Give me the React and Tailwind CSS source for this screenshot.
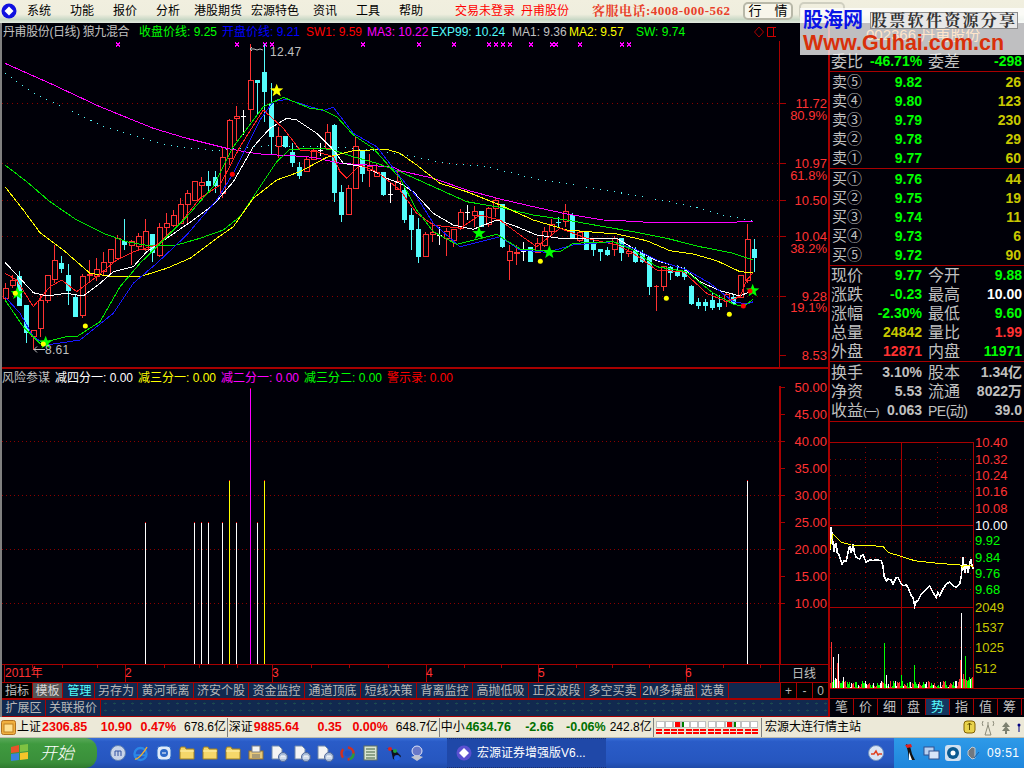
const sans = { fontFamily: '"Liberation Sans","Noto Sans CJK SC",sans-serif' };

const RED = "#ff3232";
const CYAN = "#54fcfc";
const LINE = "#a80000";
const DOT = "#8a0000";

// [bodyTop, bodyBottom, high, low, kind] in 3x crop units, r = up, c = down, w = white doji
const left = [
  [715,745,700,750,"r"],[692,705,675,715,"r"],[678,768,662,768,"c"],[765,850,765,878,"c"],[840,858,840,900,"r"],
  [752,835,735,860,"r"],[676,752,676,758,"r"],[630,688,585,700,"r"],[640,656,618,668,"c"],[675,722,642,765,"c"],
  [742,800,735,800,"c"],[680,795,672,805,"r"],[672,676,630,695,"r"],[658,680,625,692,"r"],[636,665,605,675,"r"],
  [598,638,598,672,"r"],[565,625,555,630,"r"],[574,584,508,600,"c"],[575,586,570,645,"r"],[560,590,550,600,"r"],
  [545,598,508,603,"r"],[553,610,553,635,"c"],[532,616,518,620,"r"],[520,532,490,565,"r"],[496,526,480,530,"r"],
  [462,520,445,522,"r"],[430,464,420,520,"r"],[394,452,392,452,"r"],[397,406,380,450,"r"],[394,408,362,425,"c"],
  [382,408,362,430,"c"],[322,430,295,445,"r"],[212,325,208,345,"r"],[199,205,168,272,"r"],[199,199,180,255,"w"],
  [92,178,-18,215,"r"],[90,100,90,195,"c"],[66,125,-18,215,"c"],[160,260,100,312,"c"],[260,290,230,325,"r"],
  [258,292,258,295,"c"],[305,338,278,352,"c"],[350,378,335,388,"c"],[328,365,318,365,"r"],[300,328,296,330,"r"],
  [300,300,280,318,"w"],[248,296,222,298,"r"],[226,430,222,455,"c"],[427,495,405,515,"c"],[415,492,405,495,"r"],
  [290,415,262,415,"r"],[302,372,302,395,"c"],[348,360,312,412,"r"],[368,380,340,380,"r"],[366,434,366,438,"c"],
  [433,433,395,458,"w"],[395,418,362,420,"r"],
  [420,510,405,520,"c"],[495,540,475,600,"c"],[538,620,505,640,"c"],[553,618,545,620,"r"],[546,552,520,575,"r"],
  [555,555,530,585,"w"],[544,566,535,618,"r"],[537,572,537,590,"r"],[487,535,478,540,"r"],[487,487,465,510,"w"],
  [484,497,468,530,"r"],[484,530,484,532,"c"],[475,523,472,530,"r"],[450,475,445,500,"r"],[462,590,462,595,"c"],
  [604,632,585,690,"r"],[606,610,585,645,"r"],[604,604,575,632,"w"],[590,635,590,635,"c"],[580,608,565,610,"r"],
  [545,587,530,590,"r"],[522,544,508,555,"r"],[518,518,500,535,"c"],[485,515,462,530,"r"],[495,565,490,568,"c"],
  [548,572,540,575,"r"],[545,600,545,600,"c"],[575,600,565,618,"c"],[598,606,598,632,"c"],[600,615,590,618,"c"],
  [565,598,558,618,"r"],[565,610,565,632,"c"],[603,610,585,622,"r"],[603,635,590,638,"c"],[610,635,600,640,"c"],
  [622,710,622,735,"c"],[708,708,705,782,"r"],[650,710,648,722,"r"],[650,668,648,690,"c"],[664,678,645,682,"c"],
  [666,682,650,690,"c"],[708,762,705,765,"c"],[756,768,745,778,"c"],[756,768,748,782,"c"],[750,775,730,780,"c"],
  [760,772,735,780,"c"],[734,755,730,772,"r"],[740,762,735,765,"c"],[676,742,676,745,"r"],[568,690,522,700,"r"],
  [598,624,568,666,"c"],
];

const shift = (a, dx = 1200) => a.map(([x, y]) => [x + dx, y]);

const lines = {
  magenta: [[15,40],[150,100],[300,170],[460,235],[560,265],[680,295],[750,308],[800,314],[860,316],[940,322],[1020,340],[1100,345],[1180,352],
    ...shift([[0,362],[100,385],[200,420],[300,447],[400,470],[500,492],[610,510],[700,514],[760,518],[900,518],[1060,515]])],
  cyan: [[15,70],[100,130],[200,175],[300,225],[400,255],[500,285],[640,302],[800,287],[1000,290],[1100,300],
    ...shift([[30,318],[140,340],[260,350],[400,385],[540,408],[700,435],[860,465],[980,498],[1060,512]])],
  green: [[15,345],[80,395],[150,455],[230,510],[310,550],[380,575],[450,588],[530,585],[600,565],[670,540],[720,500],[770,425],[830,335],[870,298],[960,295],[1000,300],[1060,320],[1130,340],
    ...shift([[0,365],[100,410],[200,455],[300,472],[400,495],[500,510],[600,528],[700,545],[800,565],[900,590],[1000,610],[1060,630]])],
  yellow: [[15,410],[70,480],[120,548],[190,600],[270,670],[340,680],[420,680],[500,655],[570,625],[650,565],[700,530],[760,445],[830,390],[900,365],[980,322],[1060,302],[1160,298],
    ...shift([[0,310],[50,345],[120,400],[200,425],[300,465],[400,510],[500,540],[650,552],[740,572],[810,602],[880,612],[950,632],[1020,665],[1060,668]])],
  white: [[15,637],[60,685],[100,728],[140,738],[200,730],[250,738],[300,700],[340,665],[400,650],[440,605],[500,565],[580,510],[640,465],[700,395],[760,290],[810,235],[860,205],[890,210],[950,250],[1000,300],[1030,340],[1100,352],[1160,385],
    ...shift([[0,400],[40,425],[100,490],[160,525],[220,538],[290,510],[350,530],[410,555],[480,565],[560,565],[650,565],[700,595],[770,632],[850,655],[900,695],[960,722],[1020,738],[1060,720]])],
  red: [[15,670],[50,690],[100,770],[150,710],[185,690],[230,725],[290,680],[350,630],[400,605],[470,585],[540,520],[600,445],[660,405],[720,290],[790,180],[850,235],[900,300],[950,305],[1000,320],[1020,365],[1040,385],[1080,345],[1130,365],
    ...shift([[0,420],[50,490],[100,525],[180,535],[240,495],[300,510],[360,555],[410,590],[480,535],[560,565],[650,585],[700,610],[770,660],[850,665],[920,730],[980,755],[1020,740],[1040,690],[1060,668]])],
  blue: [[15,740],[60,790],[100,860],[140,885],[240,870],[340,790],[400,700],[470,640],[560,555],[650,450],[700,370],[780,210],[820,155],[860,148],[970,182],[1000,172],[1060,250],[1130,290],
    ...shift([[0,380],[50,440],[100,520],[180,590],[300,560],[360,600],[440,607],[520,585],[640,575],[700,595],[770,630],[860,660],[930,700],[1000,755],[1040,762],[1060,755]])],
  lime: [[15,750],[70,830],[120,880],[200,860],[230,860],[300,815],[360,710],[420,640],[470,590],[560,500],[640,410],[700,290],[790,170],[850,142],[930,175],[970,180],[1010,200],[1060,255],[1120,295],
    ...shift([[0,385],[50,480],[100,545],[170,583],[290,553],[360,597],[480,605],[520,580],[640,575],[700,600],[770,650],[860,665],[940,730],[1000,762],[1030,770],[1060,748]])],
};

const sx = (x) => x / 3;
const sy = (y) => 9 + y / 3;
const pts = (a) => a.map(([x, y]) => `${sx(x).toFixed(1)},${sy(y).toFixed(1)}`).join(" ");

function starPath(cx, cy, r) {
  let d = "";
  for (let i = 0; i < 10; i++) {
    const rad = i % 2 ? r * 0.42 : r;
    const a = (Math.PI / 5) * i - Math.PI / 2;
    d += `${i ? "L" : "M"}${(cx + rad * Math.cos(a)).toFixed(1)} ${(cy + rad * Math.sin(a)).toFixed(1)}`;
  }
  return d + "Z";
}

const xMarks = [118,237,265,272,363,419,454,489,496,503,510,531,552,556,580,622,629];
const gridY = [103, 163, 200, 236, 296];
const axisLabels = [
  [103, "11.72"], [115, "80.9%"], [163, "10.97"], [175, "61.8%"], [200, "10.50"],
  [236, "10.04"], [248, "38.2%"], [296, "9.28"], [307, "19.1%"], [355, "8.53"],
];

function MainChart() {
  return (
    <svg width="826" height="326" viewBox="2 0 826 326" className="block shrink-0" style={sans}>
      {gridY.map((y) => (
        <line key={y} x1="2" x2="779" y1={y - 40.5} y2={y - 40.5} stroke={DOT} strokeDasharray="1 4" />
      ))}
      <line x1="779.5" x2="779.5" y1="-18" y2="326" stroke={LINE} />
      {gridY.concat(355).map((y) => (
        <line key={y} x1="780" x2="786" y1={y - 40.5} y2={y - 40.5} stroke={LINE} />
      ))}
      {axisLabels.map(([y, t]) => (
        <text key={t} x="827" y={y - 41 + 4.5} textAnchor="end" fontSize="13" fill={RED}>{t}</text>
      ))}
      <g stroke="#ff00ff" shapeRendering="crispEdges">
        {xMarks.map((x) => (
          <path key={x} d={`M${x - 2} 1.5l4 4m0-4l-4 4`} fill="none" strokeWidth="1.3" />
        ))}
      </g>
      <g shapeRendering="crispEdges">
        {left.map(([t, b, hi, lo, k], i) => {
          const x = 5.5 + 7 * i;
          const col = k === "r" ? RED : k === "c" ? CYAN : "#ffffff";
          const top = sy(t), bot = sy(b);
          return (
            <g key={i}>
              <line x1={x} x2={x} y1={sy(hi)} y2={sy(lo)} stroke={col} />
              {t === b ? (
                <line x1={x - 2.5} x2={x + 2.5} y1={top} y2={top} stroke={col} />
              ) : k === "c" ? (
                <rect x={x - 2.5} y={top} width="5" height={bot - top} fill={col} />
              ) : (
                <rect x={x - 2.5} y={top} width="5" height={bot - top} fill="#000008" stroke={col} />
              )}
            </g>
          );
        })}
        <polyline points={pts(lines.magenta)} fill="none" stroke="#ff00ff" />
        <polyline points={pts(lines.cyan)} fill="none" stroke={CYAN} strokeDasharray="1 6" />
        <polyline points={pts(lines.green)} fill="none" stroke="#00e800" />
        <polyline points={pts(lines.yellow)} fill="none" stroke="#ffff00" />
        <polyline points={pts(lines.white)} fill="none" stroke="#ffffff" />
        <polyline points={pts(lines.red)} fill="none" stroke="#ff2020" />
        <polyline points={pts(lines.blue)} fill="none" stroke="#1818ff" />
        <polyline points={pts(lines.lime)} fill="none" stroke="#00e800" />
      </g>
      {[[52,730],[137,878],[1437,550],[1648,607],[2258,722]].map(([x, y]) => (
        <path key={x} d={starPath(sx(x), sy(y), 7)} fill="#00ff00" />
      ))}
      <path d={starPath(sx(830), sy(122), 7)} fill="#ffff00" />
      {[[46,730],[130,882],[256,828],[1621,634],[1999,745],[2188,793]].map(([x, y]) => (
        <circle key={x} cx={sx(x)} cy={sy(y)} r="2.5" fill="#ffff00" />
      ))}
      {[[697,373],[2230,768],[2250,723]].map(([x, y]) => (
        <circle key={x} cx={sx(x)} cy={sy(y)} r="2.5" fill="#ff0000" />
      ))}
      <path d="M251 8h3m-2-2l-2 2 2 2M254 8l3 1 3-1 3 1" stroke="#c0c0c0" fill="none" />
      <text x="270" y="15" fontSize="12" letterSpacing="0.3" fill="#c0c0c0">12.47</text>
      <path d="M34 308.5h11M34 308.5l3-3M34 308.5l3 3" stroke="#c0c0c0" fill="none" />
      <text x="45" y="313" fontSize="12" letterSpacing="0.3" fill="#c0c0c0">8.61</text>
    </svg>
  );
}

const indLabels = ["50.00","45.00","40.00","35.00","30.00","25.00","20.00","15.00","10.00"];
const bars = [
  [145,522,"#fff"],[194,522,"#fff"],[201,522,"#fff"],[208,522,"#fff"],[222,522,"#fff"],[229,480,"#ffff00"],[236,522,"#fff"],
  [250,388,"#ff00ff"],[257,522,"#fff"],[264,480,"#ffff00"],[747,480,"#fff"],
];

function IndicatorChart() {
  return (
    <svg width="826" height="278" viewBox="2 386 826 278" className="block shrink-0 overflow-visible" style={sans}>
      {[441.5, 495.5, 549.5, 603.5].map((y) => (
        <line key={y} x1="2" x2="779" y1={y} y2={y} stroke={DOT} strokeDasharray="1 3" />
      ))}
      <rect x="779" y="386" width="2" height="278" fill={LINE} />
      {bars.map(([x, top, c]) => (
        <g key={x} shapeRendering="crispEdges">
          <line x1={x + 0.5} x2={x + 0.5} y1={top} y2="664" stroke={c} />
          <line x1={x + 0.5} x2={x + 0.5} y1={top} y2={top + 1} stroke="#ff0000" />
        </g>
      ))}
      {indLabels.map((t, i) => (
        <g key={t}>
          <line x1="781" x2="785" y1={387.5 + i * 27} y2={387.5 + i * 27} stroke={LINE} />
          <text x="827" y={392 + i * 27} textAnchor="end" fontSize="13" fill={RED}>{t}</text>
        </g>
      ))}
    </svg>
  );
}

const monthTicks = [
  [2, "2011年", 5], [123, "2", 125], [270, "3", 272], [424, "4", 426], [536, "5", 538], [684, "6", 685],
];
const minorTicks = [30,60,95,162,197,235,309,347,386,462,499,574,610,647,721,758];

function TimeAxis() {
  return (
    <div className="flex h-[17px] shrink-0 text-[12px] text-[#ff3232]">
      <div className="relative w-[777px] overflow-hidden">
        {monthTicks.map(([x, t, tx]) => (
          <span key={t}>
            <i className="absolute top-0 h-[17px] w-px bg-[#a80000]" style={{ left: x }} />
            <span className="absolute top-0 leading-[16px]" style={{ left: tx - 2 }}>{t}</span>
          </span>
        ))}
        {minorTicks.map((x) => (
          <i key={x} className="absolute top-0 h-[3px] w-px bg-[#a80000]" style={{ left: x }} />
        ))}
      </div>
      <div className="flex w-[49px] items-center justify-center border-l border-[#a80000] text-[#c0c0c0]">日线</div>
    </div>
  );
}

const tabCells = [
  ["指标","w-[31px] bg-black text-[#c0c0c0]"],["模板","w-[30px] bg-[#555555] text-[#d8d8d8]"],["管理","w-[30px] text-[#54fcfc] ml-[2px]"],
  ["另存为","w-[43px]"],["黄河乖离","w-[56px]"],["济安个股","w-[55px]"],["资金监控","w-[56px]"],["通道顶底","w-[56px]"],
  ["短线决策","w-[56px]"],["背离监控","w-[56px]"],["高抛低吸","w-[56px]"],["正反波段","w-[56px]"],["多空买卖","w-[56px]"],
  ["2M多操盘","w-[56px]"],["选黄","w-[32px]"],
];

function TabBar() {
  return (
    <div className="flex h-[17px] shrink-0 border-y border-[#a80000] bg-[#11294f] text-[12px] text-[#b8b8b8]">
      {tabCells.map(([t, c]) => (
        <div key={t} className={`flex items-center justify-center border-r border-[#a80000] ${c}`}>{t}</div>
      ))}
      <div className="flex-1" />
      {["+", "-", "0"].map((t) => (
        <div key={t} className="flex w-[16px] items-center justify-center border-l border-[#a80000] bg-black">{t}</div>
      ))}
    </div>
  );
}

function ExtBar() {
  return (
    <div className="flex h-[18px] shrink-0 border-y border-[#a80000] bg-[#11294f] text-[12px] text-[#b8b8b8] bg-[radial-gradient(#1d4a50_1px,transparent_1.5px)] bg-[length:9px_7px]">
      <div className="flex w-[44px] items-center justify-center border-r border-[#a80000] bg-[#11294f]">扩展区</div>
      <div className="flex w-[55px] items-center justify-center border-r border-[#a80000] bg-[#11294f]">关联报价</div>
    </div>
  );
}

function Quote({ a, b, c, d, bColor = "text-[#00ff00]", dColor = "text-[#00ff00]" }) {
  return (
    <div className="flex h-[19px] items-center text-[16px] text-[#c0c0c0]">
      <span className="w-[40px] shrink-0 whitespace-nowrap pl-[1px]">{a}</span>
      <span className={`w-[52px] whitespace-nowrap text-right text-[14px] font-bold ${bColor}`}>{b}</span>
      <span className="ml-[6px] w-[34px] shrink-0 whitespace-nowrap">{c}</span>
      <span className={`w-[60px] whitespace-nowrap text-right text-[14px] font-bold ${dColor}`}>{d}</span>
    </div>
  );
}

function Level({ name, price, vol }) {
  return (
    <div className="flex h-[19px] items-center text-[15px] text-[#c0c0c0]">
      <span className="w-[46px] whitespace-nowrap pl-[2px]">{name}</span>
      <span className="w-[46px] text-right text-[14px] font-bold text-[#00ff00]">{price}</span>
      <span className="flex-1 pr-[3px] text-right text-[14px] font-bold text-[#c8c800]">{vol}</span>
    </div>
  );
}

const sell = [["卖⑤","9.82","26"],["卖④","9.80","123"],["卖③","9.79","230"],["卖②","9.78","29"],["卖①","9.77","60"]];
const buy = [["买①","9.76","44"],["买②","9.75","19"],["买③","9.74","11"],["买④","9.73","6"],["买⑤","9.72","90"]];

const whiteLine = [[5,365],[10,295],[13,330],[15,340],[18,370],[22,345],[25,345],[28,372],[32,375],[42,405],[48,395],[55,395],[60,370],[65,350],[70,372],[75,345],[80,375],[85,385],[95,390],[100,380],[105,378],[115,400],[125,392],[135,395],[145,392],[160,395],[165,410],[168,440],[175,455],[180,450],[188,452],[195,465],[205,445],[210,445],[220,465],[225,470],[235,468],[240,475],[250,500],[255,505],[260,530],[265,515],[270,515],[280,495],[290,485],[305,470],[315,490],[325,505],[330,490],[335,500],[345,480],[355,465],[365,460],[375,470],[385,475],[395,465],[400,440],[405,385],[410,432],[415,405],[420,432],[428,390],[432,410],[436,420]];
const yellowLine = [[5,365],[15,315],[40,340],[70,348],[165,352],[180,370],[260,395],[320,402],[395,408],[402,415],[410,408],[436,412]];
const volPeaks = {
  831: [46, "#ff3232"], 833: [31, "#fff"], 838: [34, "#fff"], 837: [25, "#ff3232"], 884: [45, "#00ff00"], 886: [13, "#fff"],
  914: [23, "#00ff00"], 901: [13, "#00ff00"], 961: [75, "#fff"], 960: [28, "#ff3232"], 965: [32, "#00ff00"], 963: [14, "#ff3232"], 971: [10, "#00ff00"],
};
const volColors = ["#ff3232", "#00ff00", "#fff", "#ff3232", "#00ff00"];
const vols = Array.from({ length: 143 }, (_, i) => {
  const px = 830 + i;
  if (volPeaks[px]) return [px, ...volPeaks[px]];
  const h = 1 + ((i * 37 + (i * i) % 23) % 7);
  const edge = i < 14 || i > 128;
  return [px, edge ? h + 4 : h, volColors[(i * 7 + (i % 3)) % 5]];
});

const minuteLabels = [
  [443,"10.40",RED],[460,"10.32",RED],[476,"10.24",RED],[492,"10.16",RED],[509,"10.08",RED],[526,"10.00","#fff"],
  [541,"9.92","#00ff00"],[558,"9.84","#00ff00"],[574,"9.76","#00ff00"],[590,"9.68","#00ff00"],
  [608,"2049","#c8c800"],[628,"1537","#c8c800"],[648,"1025","#c8c800"],[669,"512","#c8c800"],
];

function MinuteChart() {
  const px = (a) => a.map(([x, y]) => `${(828 + x / 3).toFixed(1)},${(430 + y / 3).toFixed(1)}`).join(" ");
  return (
    <svg width="194" height="276" viewBox="830 423 194 276" className="block shrink-0" style={sans}>
      {[460,476,492,509,542,558,574,590,628,648,669].map((y) => (
        <line key={y} x1="830" x2="973" y1={y + 0.5} y2={y + 0.5} stroke={DOT} strokeDasharray="1 4" />
      ))}
      {[865, 937].map((x) => (
        <line key={x} x1={x + 0.5} x2={x + 0.5} y1="443" y2="689" stroke={DOT} strokeDasharray="1 4" />
      ))}
      <line x1="901.5" x2="901.5" y1="443" y2="689" stroke={LINE} />
      {[443, 526, 608, 689].map((y) => (
        <line key={y} x1="830" x2={y === 689 ? 1024 : 973} y1={y + 0.5} y2={y + 0.5} stroke={LINE} />
      ))}
      <line x1="973.5" x2="973.5" y1="443" y2="689" stroke={LINE} />
      {vols.map(([x, h, c]) => (
        <line key={x} x1={x + 0.5} x2={x + 0.5} y1={689 - h} y2="689" stroke={c} shapeRendering="crispEdges" />
      ))}
      <polyline points={px(whiteLine)} fill="none" stroke="#fff" strokeWidth="1.6" shapeRendering="crispEdges" />
      <polyline points={px(yellowLine)} fill="none" stroke="#ffff00" shapeRendering="crispEdges" />
      {minuteLabels.map(([y, t, c]) => (
        <text key={t} x="975" y={y + 5} fontSize="13" fill={c}>{t}</text>
      ))}
    </svg>
  );
}

const sideTabs = ["笔","价","细","盘","势","指","值","筹"];

function RightPanel() {
  return (
    <div className="flex w-[196px] flex-col border-l-2 border-[#a80000] bg-[#000008]">
      <div className="h-[29px] shrink-0 pt-[2px] pl-[36px] text-[15px] leading-[20px] text-[#ff9c30]">002366 丹甫股份</div>
      <div className="shrink-0 border-b border-[#a80000]">
        <Quote a="委比" b="-46.71%" c="委差" d="-298" />
      </div>
      <div className="shrink-0 border-b border-[#a80000] pt-[1px]">
        {sell.map(([n, p, v]) => <Level key={n} name={n} price={p} vol={v} />)}
      </div>
      <div className="shrink-0 border-b border-[#a80000] pt-[1px]">
        {buy.map(([n, p, v]) => <Level key={n} name={n} price={p} vol={v} />)}
      </div>
      <div className="shrink-0 border-b border-[#a80000]">
        <Quote a="现价" b="9.77" c="今开" d="9.88" />
        <Quote a="涨跌" b="-0.23" c="最高" d="10.00" dColor="text-white" />
        <Quote a="涨幅" b="-2.30%" c="最低" d="9.60" />
        <Quote a="总量" b="24842" bColor="text-[#c8c800]" c="量比" d="1.99" dColor="text-[#ff3232]" />
        <Quote a="外盘" b="12871" bColor="text-[#ff3232]" c="内盘" d="11971" />
      </div>
      <div className="shrink-0 border-b border-[#a80000] py-[1px]">
        <Quote a="换手" b="3.10%" bColor="text-[#c0c0c0]" c="股本" d="1.34亿" dColor="text-[#c0c0c0]" />
        <Quote a="净资" b="5.53" bColor="text-[#c0c0c0]" c="流通" d="8022万" dColor="text-[#c0c0c0]" />
        <Quote a={<>收益<span className="text-[11px] tracking-[-1px]">(一)</span></>} b="0.063" bColor="text-[#c0c0c0]" c={<span className="text-[14px] tracking-[-0.5px]">PE(动)</span>} d="39.0" dColor="text-[#c0c0c0]" />
      </div>
      <MinuteChart />
      <div className="flex h-[17px] shrink-0 border-t border-[#a80000] text-[13px] text-[#c0c0c0]">
        {sideTabs.map((t) => (
          <div key={t} className={`flex w-[24px] items-center justify-center border-r border-[#a80000] ${t === "势" ? "bg-[#14365f] text-[#54fcfc]" : ""}`}>{t}</div>
        ))}
      </div>
    </div>
  );
}

const menu = [
  ["系统","w-[43px]"],["功能","w-[43px]"],["报价","w-[43px]"],["分析","w-[38px]"],["港股期货","w-[57px]"],
  ["宏源特色","w-[62px]"],["资讯","w-[43px]"],["工具","w-[43px]"],["帮助","w-[56px]"],
];

function TopBar() {
  return (
    <div className="flex h-[23px] items-center bg-[linear-gradient(180deg,#f1efdf_0%,#efeede_62%,#c9d8c6_85%,#e4ebe0_100%)] pb-[2px] text-[12px] text-black">
      <svg width="16" height="16" viewBox="0 0 16 16" className="ml-[1px] mr-[10px] shrink-0">
        <circle cx="8" cy="8" r="7.5" fill="#1010e0" />
        <path d="M8 3.5L12.5 8 8 12.5 3.5 8z" fill="#fff" />
      </svg>
      {menu.map(([t, w]) => <span key={t} className={`shrink-0 ${w}`}>{t}</span>)}
      <span className="w-[66px] shrink-0 text-[#ff0000]">交易未登录</span>
      <span className="w-[71px] shrink-0 text-[#ff0000]">丹甫股份</span>
      <span className="w-[151px] shrink-0 font-['Liberation_Serif','Noto_Serif_CJK_SC',serif] text-[13px] font-bold tracking-[0.5px] text-[#e8402a]">客服电话:4008-000-562</span>
      <span className="flex h-[18px] w-[50px] shrink-0 items-center justify-center rounded-[5px] border-2 border-[#b8b8a8] bg-[#f8f6ea] text-[13px]">行　情</span>
      <span className="ml-[6px] h-[18px] w-[46px] shrink-0 rounded-[5px] border-2 border-[#cfcfc0]" />
    </div>
  );
}

function Watermark() {
  return (
    <div className="absolute left-[800px] top-[8px] h-[47px] w-[224px] overflow-hidden bg-white/75">
      <div className="flex h-[25px] items-center">
        <span className="ml-[3px] w-[67px] text-[20px] font-bold leading-[25px] text-[#0a14e6]">股海网</span>
        <span className="flex h-[17px] items-center border border-[#8c8c8c] bg-[#e8e8e8] text-[#333] font-['Liberation_Serif','Noto_Serif_CJK_SC',serif] text-[16px] font-bold leading-[17px] tracking-[2.3px] whitespace-nowrap">股票软件资源分享</span>
      </div>
      <div className="ml-[3px] whitespace-nowrap text-[21.5px] font-bold leading-[20px] text-[#d9300a]">Www.Guhai.com.cn</div>
    </div>
  );
}

function Cell({ w, c = "", right, bold, children }) {
  return (
    <span className={`shrink-0 whitespace-nowrap ${w} ${right ? "text-right" : ""} ${bold ? "text-[12.5px] font-bold" : ""} ${c}`}>{children}</span>
  );
}

function Gauge() {
  const top = [0, 1, 2, 3, 4, 5];
  return (
    <div className="w-[50px] shrink-0">
      <div className="flex h-[7px]">
        {top.map((i) => (
          <div key={i} className="relative flex-1 border border-[#c0c0c0] bg-white">
            {i === 2 && <i className="absolute right-0 top-0 h-full w-[5px] bg-[#ff0000]" />}
            {i === 3 && <i className="absolute left-0 top-0 h-full w-[2px] bg-[#008000]" />}
          </div>
        ))}
      </div>
      {[0, 1].map((r) => (
        <div key={r} className="mt-[1px] flex justify-between">
          {[0, 1, 2, 3, 4, 5, 6].map((i) => <i key={i} className="h-[2px] w-[6px] bg-[#ff0000]" />)}
        </div>
      ))}
    </div>
  );
}

function StatusBar() {
  return (
    <div className="flex h-[21px] items-center border-b border-[#bdbdb0] bg-[#ece9d8] text-[12px] text-black">
      <svg width="15" height="15" viewBox="0 0 15 15" className="ml-[1px] mr-[1px] shrink-0">
        <rect x="0.5" y="0.5" width="14" height="14" rx="2" fill="#f0b040" stroke="#b07020" />
        <rect x="3" y="4" width="9" height="8" fill="#ffe090" stroke="#c08020" />
      </svg>
      <Cell w="w-[25px]">上证</Cell>
      <Cell w="w-[46px]" bold c="text-[#f00000]">2306.85</Cell>
      <Cell w="w-[44px]" right bold c="text-[#f00000]">10.90</Cell>
      <Cell w="w-[44px]" right bold c="text-[#f00000]">0.47%</Cell>
      <Cell w="w-[50px]" right>678.6亿</Cell>
      <i className="mx-[1px] h-[19px] w-px bg-[#808080]" />
      <Cell w="w-[25px]">深证</Cell>
      <Cell w="w-[47px]" bold c="text-[#f00000]">9885.64</Cell>
      <Cell w="w-[41px]" right bold c="text-[#f00000]">0.35</Cell>
      <Cell w="w-[46px]" right bold c="text-[#f00000]">0.00%</Cell>
      <Cell w="w-[50px]" right>648.7亿</Cell>
      <i className="mx-[1px] h-[19px] w-px bg-[#808080]" />
      <Cell w="w-[25px]">中小</Cell>
      <Cell w="w-[47px]" bold c="text-[#007000]">4634.76</Cell>
      <Cell w="w-[41px]" right bold c="text-[#007000]">-2.66</Cell>
      <Cell w="w-[52px]" right bold c="text-[#007000]">-0.06%</Cell>
      <Cell w="w-[46px]" right>242.8亿</Cell>
      <i className="ml-[1px] mr-[3px] h-[19px] w-px bg-[#808080]" />
      <Gauge />
      <div className="w-[2px]" />
      <Gauge />
      <i className="mx-[3px] h-[19px] w-px bg-[#808080]" />
      <Cell w="w-[198px]">宏源大连行情主站</Cell>
      <svg width="61" height="20" viewBox="0 0 61 20" className="shrink-0">
        <rect x="1" y="4" width="11" height="12" rx="3" fill="#e8d24a" stroke="#806000" />
        <path d="M6.5 6v7M4.5 8l2-2 2 2" stroke="#605000" fill="none" />
        <path d="M25 8l-3 10h6zM25 8V5M20 4a5 5 0 0 0 0 5M30 4a5 5 0 0 1 0 5" stroke="#8a8a78" fill="none" />
        <path d="M43 5l-4 5h8zM43 9l-4 5h8zM42 14h2v3h-2z" fill="#7c8070" />
        <circle cx="56" cy="8" r="1.5" fill="#000080" />
        <path d="M56 9v6" stroke="#000080" />
      </svg>
    </div>
  );
}

function Folder() {
  return (
    <svg width="16" height="14" viewBox="0 0 16 14">
      <path d="M1 3l1-2h4l1 2h8v10H1z" fill="#f5d76a" stroke="#a08020" />
      <path d="M1 5h14" stroke="#fff2b0" />
    </svg>
  );
}
function Paper() {
  return (
    <svg width="18" height="17" viewBox="0 0 18 17">
      <path d="M2 1h7l3 3v10H2z" fill="#f4f4f4" stroke="#7088a8" />
      <circle cx="13" cy="12" r="4.5" fill="#a8bcd8" stroke="#50689a" />
      <path d="M11 14v-3h4v3M13 11v3" stroke="#fff" fill="none" />
    </svg>
  );
}

const quick = [
  <svg key="m" width="16" height="16" viewBox="0 0 16 16"><circle cx="8" cy="8" r="7.5" fill="#c8d4e8" stroke="#6080b0" /><path d="M5 11V6h6v5M8 6v5" stroke="#3050a0" fill="none" /></svg>,
  <svg key="e" width="17" height="17" viewBox="0 0 17 17"><circle cx="8.5" cy="9" r="6" fill="none" stroke="#2a88e8" strokeWidth="2.4" /><path d="M3 10.2h11" stroke="#2a88e8" strokeWidth="2" /><path d="M3 14C6 15 13 6 15 2" stroke="#f0b030" fill="none" strokeWidth="1.4" /></svg>,
  <svg key="o" width="16" height="16" viewBox="0 0 16 16"><rect x="1" y="1" width="14" height="14" rx="4" fill="#dfeaf8" stroke="#2a68c8" /><circle cx="8" cy="8" r="4" fill="#2a68c8" /><path d="M6 8h4" stroke="#fff" /></svg>,
  <Folder key="f1" />, <Folder key="f2" />, <Folder key="f3" />,
  <svg key="p" width="16" height="16" viewBox="0 0 16 16"><rect x="1" y="6" width="14" height="8" fill="#e8c878" stroke="#907030" /><rect x="4" y="1" width="8" height="6" fill="#f4f4f4" stroke="#808080" /><path d="M4 10h8M4 12h8" stroke="#707070" /></svg>,
  <Paper key="a" />, <Paper key="b" />, <Paper key="c" />,
  <svg key="w" width="17" height="17" viewBox="0 0 17 17"><circle cx="8.5" cy="8.5" r="6" fill="none" stroke="#d03020" strokeWidth="2.5" strokeDasharray="9 5" /><circle cx="8.5" cy="8.5" r="6" fill="none" stroke="#20a040" strokeWidth="2.5" strokeDasharray="7 30" /><circle cx="8.5" cy="8.5" r="3" fill="#2050c0" /></svg>,
  <svg key="n" width="15" height="16" viewBox="0 0 15 16"><rect x="1" y="1" width="13" height="14" fill="#d8e4d0" stroke="#607060" /><path d="M3 4h9M3 7h9M3 10h9M3 13h9" stroke="#406040" /></svg>,
  <svg key="g" width="17" height="17" viewBox="0 0 17 17"><path d="M1 3l5 2 2 9 5 2 3-5-5-5z" fill="#101020" /><circle cx="5" cy="4" r="2" fill="#e02020" /><circle cx="10" cy="6" r="2" fill="#20a040" /><circle cx="12" cy="13" r="3" fill="#2060e0" /></svg>,
  <svg key="c2" width="16" height="17" viewBox="0 0 16 17"><circle cx="8" cy="6" r="5" fill="#6878c8" stroke="#e0e4f8" /><path d="M2 12l6-2 6 2-6 4z" fill="#c0c4d0" /></svg>,
];

function Taskbar() {
  return (
    <div className="flex h-[30px] items-stretch bg-[linear-gradient(180deg,#3a6fd8_0%,#2a5cc8_12%,#2656bf_80%,#1f4aa8_100%)] text-white">
      <div className="flex w-[97px] shrink-0 items-center rounded-r-[12px] bg-[linear-gradient(180deg,#5aa85a_0%,#3f9a3f_20%,#3a8f3a_80%,#2f7a2f_100%)] pl-[10px]">
        <svg width="20" height="18" viewBox="0 0 20 18" className="mr-[10px]">
          <path d="M1 3l8-2v7l-8 1z" fill="#e8532a" />
          <path d="M10 1l8-1v7l-8 1z" fill="#7fc242" />
          <path d="M1 10l8-1v7l-8 1z" fill="#3a80e0" />
          <path d="M10 9l8-1v7l-8 1z" fill="#f5c52a" />
        </svg>
        <span className="text-[17px] font-light italic leading-none">开始</span>
      </div>
      <div className="ml-[9px] flex w-[322px] shrink-0 items-center">
        {quick.map((icon, i) => (
          <span key={i} className="flex w-[23px] shrink-0 justify-center">{icon}</span>
        ))}
      </div>
      <div className="ml-[19px] flex w-[159px] shrink-0 items-center border-y border-dotted border-[#1a2f70] bg-[#1f48a8] pl-[9px] text-[12px]">
        <svg width="16" height="16" viewBox="0 0 16 16" className="mr-[5px] shrink-0">
          <circle cx="8" cy="8" r="7.5" fill="#5a50d0" />
          <path d="M8 3l5 5-5 5-5-5z" fill="#fff" />
        </svg>
        <span className="whitespace-nowrap">宏源证券增强版V6...</span>
      </div>
      <div className="flex flex-1 items-center justify-end">
        <svg width="16" height="16" viewBox="0 0 16 16" className="mr-[10px]">
          <circle cx="8" cy="8" r="7.5" fill="#d8e4f4" stroke="#7090c0" />
          <path d="M3 9h3l2-3 2 4 1-1h3" stroke="#e04020" fill="none" strokeWidth="1.4" />
        </svg>
      </div>
      <div className="flex w-[130px] shrink-0 items-center bg-[linear-gradient(180deg,#2e9ae8_0%,#1f86dc_100%)] pl-[10px] text-[12px]">
        <svg width="78" height="20" viewBox="0 0 78 20" className="shrink-0">
          <path d="M2 1l4 2 2 8 3 6H5L4 9z" fill="#111" />
          <path d="M1 2l6-1 1 3-5 1z" fill="#e02020" />
          <path d="M5 9l3 8H5z" fill="#fff" />
          <rect x="20" y="4" width="10" height="8" fill="#b8d0f0" stroke="#305090" />
          <rect x="25" y="8" width="10" height="8" fill="#d8e4f8" stroke="#305090" />
          <rect x="41" y="2" width="16" height="16" rx="3" fill="#d0e0f0" />
          <circle cx="49" cy="10" r="6" fill="#0a5a90" />
          <circle cx="49" cy="10" r="2.5" fill="#fff" />
          <path d="M64 8l4-4 3 1v10l-3 1-4-4z" fill="#707880" stroke="#c0c8d0" />
          <path d="M70 15l5-6" stroke="#2060a0" />
        </svg>
        <span className="ml-[5px] tracking-[0.5px]">09:51</span>
      </div>
    </div>
  );
}

export default function App() {
  return (
    <div className="relative h-[768px] w-[1024px] overflow-hidden bg-[#000008]" style={sans}>
      <TopBar />
      <div className="flex h-[694px]">
        <div className="flex w-[828px] flex-col border-l-2 border-[#808080]">
          <div className="relative flex h-[18px] shrink-0 items-center text-[12px] whitespace-nowrap">
            <span className="w-[137px] pl-[1px] tracking-[-0.4px] text-[#c0c0c0]">丹甫股份(日线) 狼九混合</span>
            <span className="w-[83px] text-[#00ff00]">收盘价线: 9.25</span>
            <span className="w-[84px] text-[#0000ff]">开盘价线: 9.21</span>
            <span className="w-[61px] text-[#ff0000]">SW1: 9.59</span>
            <span className="w-[64px] text-[#ff00ff]">MA3: 10.22</span>
            <span className="w-[81px] text-[#54fcfc]">EXP99: 10.24</span>
            <span className="w-[57px] text-[#c0c0c0]">MA1: 9.36</span>
            <span className="w-[67px] text-[#ffff00]">MA2: 9.57</span>
            <span className="text-[#00ff00]">SW: 9.74</span>
            <svg width="22" height="12" viewBox="0 0 22 12" className="absolute left-[752px] top-[3px]">
              <path d="M5 1l4.5 5L5 11 .5 6z" fill="none" stroke="#a80000" />
              <path d="M13.5 1.5h9v9h-9zM19.5 1.5v9" fill="none" stroke="#d00000" />
            </svg>
          </div>
          <MainChart />
          <div className="shrink-0 border-t-2 border-[#a80000]" />
          <div className="flex h-[17px] shrink-0 items-center text-[12px] whitespace-nowrap">
            <span className="w-[53px] text-[#c0c0c0]">风险参谋</span>
            <span className="w-[83px] text-white">减四分一: 0.00</span>
            <span className="w-[83px] text-[#ffff00]">减三分一: 0.00</span>
            <span className="w-[83px] text-[#ff00ff]">减二分一: 0.00</span>
            <span className="w-[83px] text-[#00ff00]">减三分二: 0.00</span>
            <span className="text-[#ff0000]">警示录: 0.00</span>
          </div>
          <IndicatorChart />
          <div className="shrink-0 border-t border-[#a80000]" />
          <TimeAxis />
          <TabBar />
          <ExtBar />
        </div>
        <RightPanel />
      </div>
      <StatusBar />
      <Taskbar />
      <Watermark />
    </div>
  );
}
